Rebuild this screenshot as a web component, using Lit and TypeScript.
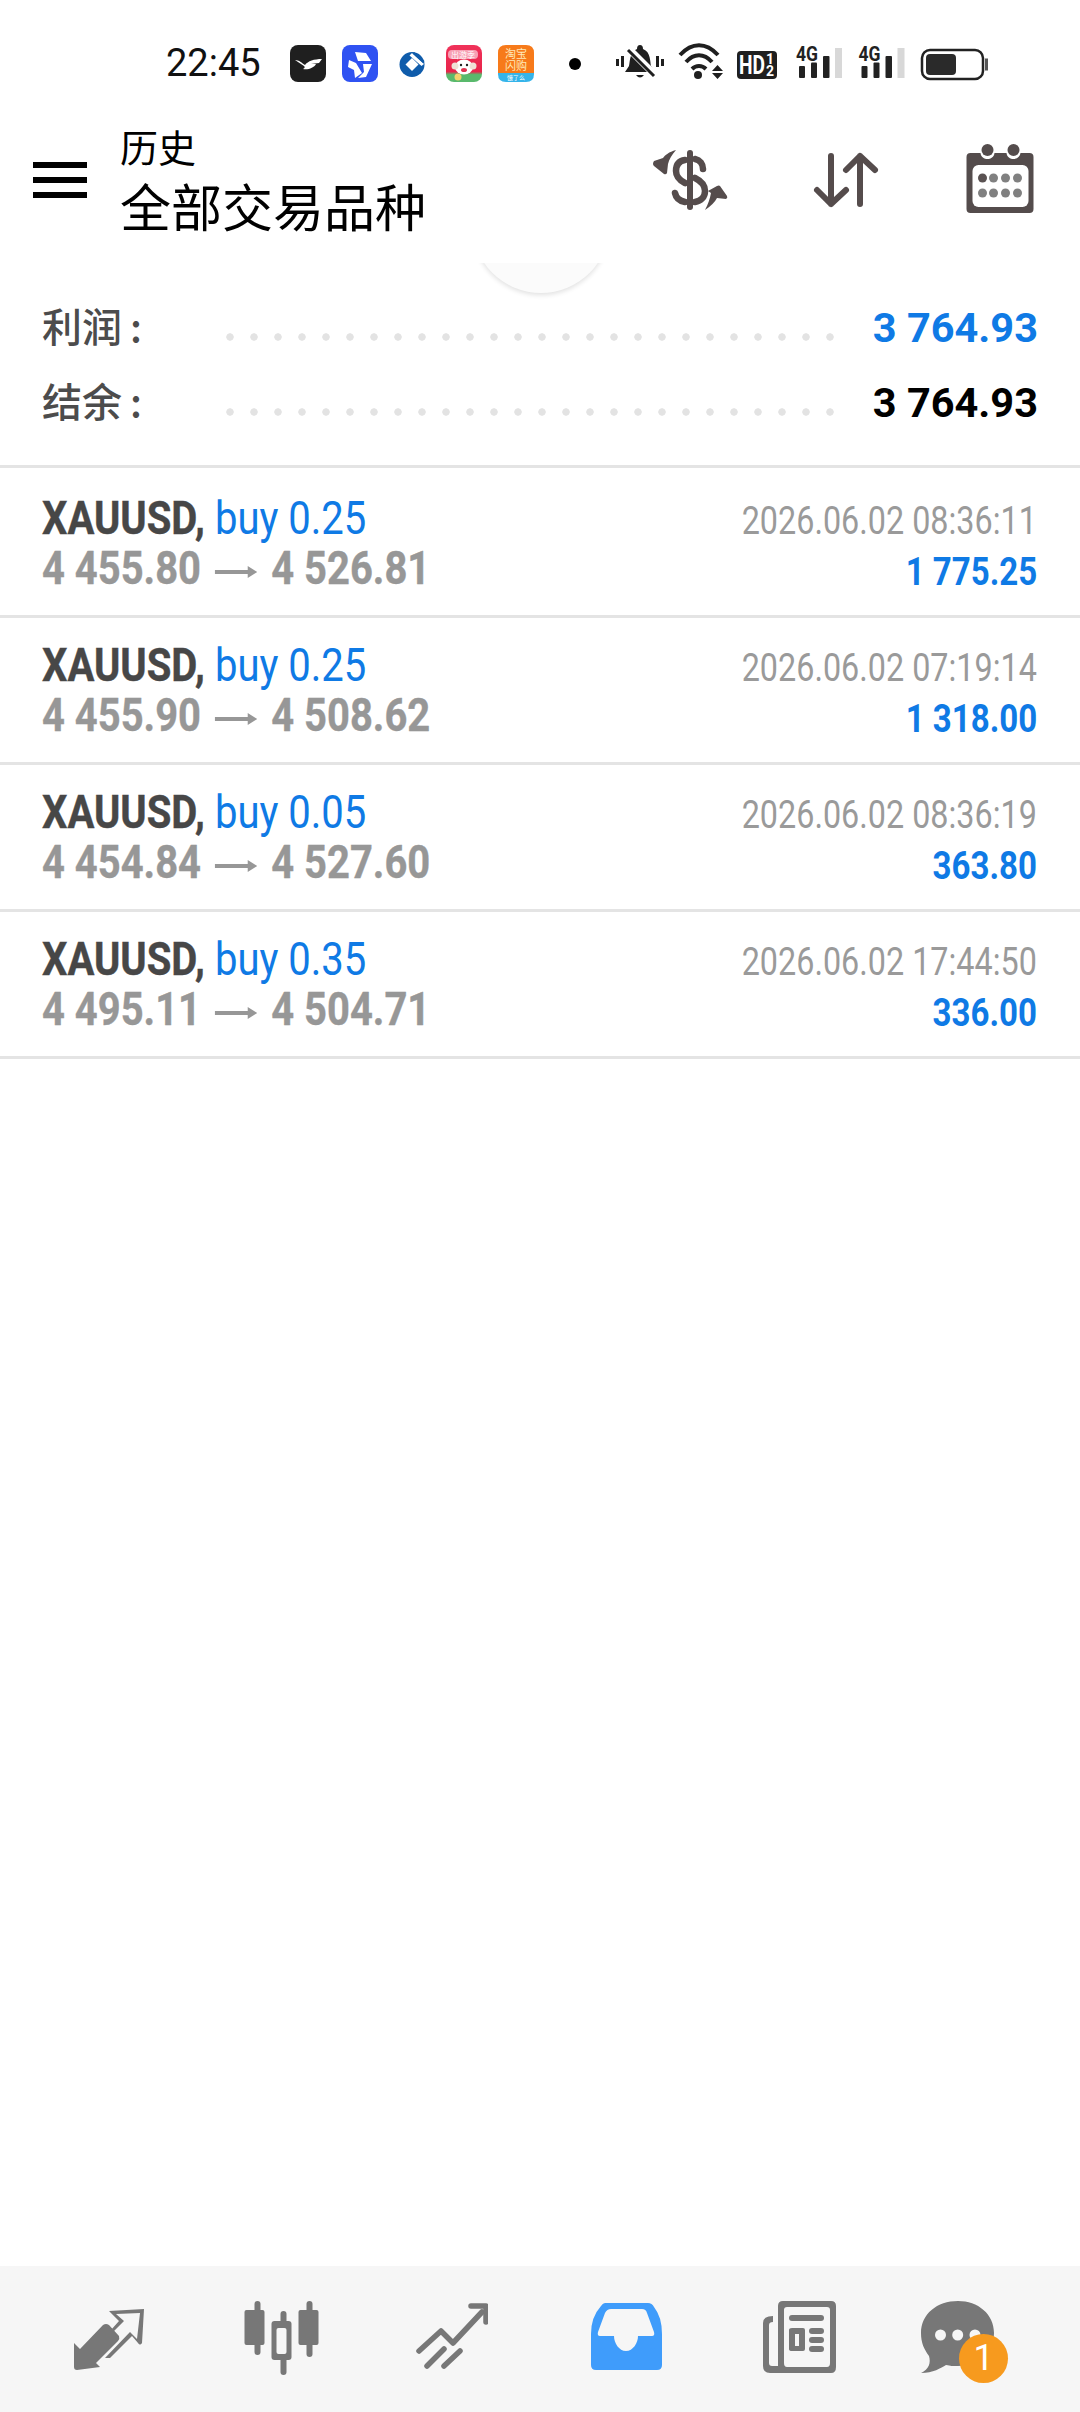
import { LitElement, html, css, svg } from "lit";
import { customElement } from "lit/decorators.js";

const rows = [
  { lot: "0.25", from: "4 455.80", to: "4 526.81", time: "2026.06.02 08:36:11", profit: "1 775.25" },
  { lot: "0.25", from: "4 455.90", to: "4 508.62", time: "2026.06.02 07:19:14", profit: "1 318.00" },
  { lot: "0.05", from: "4 454.84", to: "4 527.60", time: "2026.06.02 08:36:19", profit: "363.80" },
  { lot: "0.35", from: "4 495.11", to: "4 504.71", time: "2026.06.02 17:44:50", profit: "336.00" },
];

const signal = svg`
  <text x="0" y="14" font-family="Roboto" font-weight="700" font-size="20" textLength="22" lengthAdjust="spacingAndGlyphs" fill="#222">4G</text>
  <rect x="3" y="19" width="6" height="12" rx="1" fill="#222"/>
  <rect x="15" y="15.5" width="6" height="15.5" rx="1" fill="#222"/>
  <rect x="27" y="9" width="6.5" height="22" rx="1" fill="#222"/>
  <rect x="39" y="1" width="7" height="30" fill="#d8d8d8"/>`;

@customElement("app-root")
export class AppRoot extends LitElement {
  static styles = css`
    :host { display: block; width: 1080px; height: 2412px; background: #fff; position: relative; overflow: hidden;
      font-family: Roboto, "Noto Sans CJK SC", sans-serif; }
    .page { display: flex; flex-direction: column; height: 2412px; }
    .status { height: 90px; display: flex; align-items: center; padding-left: 166px; padding-top: 36px; box-sizing: border-box; flex: none; }
    .time { font-size: 38px; color: #111; width: 124px; line-height: 54px; flex: none; }
    .status svg { display: block; flex: none; }
    .header { height: 173px; flex: none; display: flex; align-items: flex-start; position: relative; z-index: 2; background: #fff; }
    .burger { margin: 72px 0 0 33px; width: 54px; display: flex; flex-direction: column; gap: 9px; flex: none; }
    .burger i { display: block; height: 6px; background: #000; }
    .titles { margin: 35px 0 0 33px; font-family: "Noto Sans CJK SC", sans-serif; color: #000; flex: none; }
    .t1 { font-size: 38px; line-height: 42px; }
    .t2 { font-size: 51px; line-height: 70px; margin-top: 3px; }
    .hicons { position: absolute; inset: 0; pointer-events: none; }
    .hicons svg { position: absolute; }
    .scrollknob { position: absolute; left: 472px; top: 155px; width: 138px; height: 138px; border-radius: 50%; background: #fbfbfb;
      box-shadow: 0 2px 5px rgba(0,0,0,.12); z-index: 1; }
    .summary { padding: 27px 42px 0 42px; flex: none; height: 205px; box-sizing: border-box; border-bottom: 3px solid #e4e4e4; }
    .sumrow { display: flex; align-items: center; height: 75px; }
    .sumlabel { width: 184px; font-family: "Noto Sans CJK SC", sans-serif; font-size: 40px; font-weight: 500; color: #4c4c4c; flex: none; line-height: 50px; white-space: pre; margin-top: -6px; }
    .colon { margin-left: 8px; }
    .dots { width: 624px; height: 8px; margin-top: 18px; flex: none;
      background: radial-gradient(circle at 4px 4px, #e3e3e3 3.4px, transparent 4px) 0 0 / 24px 8px repeat-x; }
    .sumval { margin-left: auto; font-size: 41.5px; font-weight: 700; white-space: pre; }
    .blue { color: #0f7ae5; }
    .black { color: #000; }
    .row { height: 147px; box-sizing: border-box; border-bottom: 3px solid #e4e4e4; display: flex; justify-content: space-between; padding: 0 43px 0 42px; flex: none; }
    .row.first { height: 150px; padding-top: 3px; }
    .left, .right { display: flex; flex-direction: column; }
    .right { align-items: flex-end; }
    .squeeze { display: inline-block; white-space: pre; }
    .left .squeeze { transform-origin: left center; }
    .right .squeeze { transform-origin: right center; }
    .l1 { font-size: 46px; line-height: 54px; margin-top: 20px; color: #474747; font-weight: 700; -webkit-text-stroke: .4px #474747; }
    .l1 .squeeze { transform: scaleX(.87); }
    .l1 span span { font-weight: 400; color: #0f7ae5; -webkit-text-stroke: 0; }
    .l2 { font-size: 46px; line-height: 50px; margin-top: -2px; color: #979797; font-weight: 700; -webkit-text-stroke: .4px #979797; }
    .l2 .squeeze { transform: scaleX(.868); }
    .r1 { font-size: 38px; line-height: 50px; margin-top: 25px; color: #9a9a9a; }
    .r1 .squeeze { transform: scaleX(.851); }
    .r2 { font-size: 38px; line-height: 46px; margin-top: 3px; color: #0f7ae5; font-weight: 700; }
    .r2 .squeeze { transform: scaleX(.87); }
    .arrow { display: inline-block; width: 49px; height: 12px; margin: 0 16px; vertical-align: middle; }
    .spacer { flex: 1; }
    .nav { height: 146px; flex: none; background: #f6f6f6; position: relative; }
    .nav svg { position: absolute; }
    .badge { position: absolute; left: 959px; top: 68px; width: 49px; height: 49px; border-radius: 50%; background: #f79a1e; color: #fff;
      font-size: 36px; text-align: center; line-height: 49px; font-weight: 400; }
  `;

  render() {
    return html`<div class="page">
      <div class="status">
        <span class="time">22:45</span>
        <svg width="700" height="54" viewBox="290 36 700 54">
          <defs>
            <linearGradient id="g1" x1="0" y1="0" x2="0" y2="1"><stop offset="0" stop-color="#f0325a"/><stop offset=".72" stop-color="#e8244a"/><stop offset=".8" stop-color="#59b96c"/></linearGradient>
          </defs>
          <g transform="translate(290 45)">
            <rect width="36" height="37" rx="8" fill="#1f1f1f"/>
            <path d="M5 15 C9 15 12 18 15 20 C18 16 24 14 32 14 L29 18 L21 19 L26 19 C24 23 18 25 13 24 C15 23 15 22 14 21 C11 19 8 17 5 15Z" fill="#fff"/>
          </g>
          <g transform="translate(342 45)">
            <rect width="36" height="37" rx="8" fill="#2f52f2"/>
            <path d="M13 7 L24 8 L29 16 L16 16Z M7 15 L14 18 L20 28 L13 33 L12 25 L6 22Z M21 19 L30 19 L24 32 L16 33 L22 27Z" fill="#fff"/>
          </g>
          <g transform="translate(399 52)">
            <circle cx="13" cy="12.5" r="12.5" fill="#0f5cab"/>
            <path d="M13 6 L19.5 12.5 L13 19 L6.5 12.5Z" fill="#fff"/>
            <path d="M13 1 L25 12 L22.5 14 L10.5 3.5Z" fill="#fff"/>
            <path d="M15 0 L25.5 9 L24 11 L13.5 1.5Z" fill="#0f5cab"/>
          </g>
          <g transform="translate(446 45)">
            <rect width="36" height="37" rx="8" fill="url(#g1)"/>
            <rect x="2" y="5" width="30" height="9" rx="4" fill="#f7a0b4"/>
            <text x="17" y="13" font-size="8" text-anchor="middle" fill="#fff" font-family="Noto Sans CJK SC">出游季</text>
            <ellipse cx="18" cy="22" rx="9" ry="7.5" fill="#fff"/>
            <circle cx="9" cy="21" r="3.5" fill="#efe1d6"/>
            <circle cx="27" cy="21" r="3.5" fill="#efe1d6"/>
            <circle cx="15" cy="20" r="1.2" fill="#222"/><circle cx="21" cy="20" r="1.2" fill="#222"/>
            <ellipse cx="18" cy="25" rx="3" ry="2" fill="#e2304f"/>
            <circle cx="12" cy="32" r="3.5" fill="#f3d36c"/>
          </g>
          <g transform="translate(498 45)">
            <path d="M8 0 H28 Q36 0 36 8 V28 H0 V8 Q0 0 8 0Z" fill="#f77a1a"/>
            <path d="M0 28 H36 V29 Q36 37 28 37 H8 Q0 37 0 29Z" fill="#35b4ea"/>
            <text x="18" y="13" font-size="11" text-anchor="middle" fill="#ffe9b8" font-family="Noto Sans CJK SC">淘宝</text>
            <text x="18" y="24.5" font-size="11" text-anchor="middle" fill="#ffe9b8" font-family="Noto Sans CJK SC">闪购</text>
            <text x="18" y="34.5" font-size="6" text-anchor="middle" fill="#fff" font-family="Noto Sans CJK SC">饿了么</text>
          </g>

          <circle cx="575" cy="64" r="6" fill="#000"/>

          <g fill="#1f1f1f">
            <rect x="616" y="59" width="3" height="7"/><rect x="621" y="56" width="3" height="11"/>
            <rect x="656" y="56" width="3" height="11"/><rect x="661" y="59" width="3" height="7"/>
            <path d="M640 45 Q643 45 643 49 C651 52 650 62 651 66 L655 72 L625 72 L629 66 C630 60 630 52 637 49 Q637 45 640 45Z"/>
            <path d="M636 75 h8 q-4 5 -8 0Z"/>
          </g>
          <path d="M628 48 L655 75" stroke="#fff" stroke-width="7"/>
          <path d="M628 50 L654 76" stroke="#1f1f1f" stroke-width="3"/>

          <g fill="none" stroke="#1f1f1f" stroke-width="4">
            <path d="M680 55 C692 42 706 42 718 55"/>
            <path d="M686 62 C694 53 704 53 712 62"/>
            <path d="M692 69 C696 65 702 65 706 69"/>
          </g>
          <circle cx="698" cy="75" r="4" fill="#1f1f1f"/>
          <path d="M712 71 L717.5 65 L723 71Z M712 73 L723 73 L717.5 79Z" fill="#1f1f1f"/>

          <rect x="737" y="51" width="40" height="28" rx="4" fill="#1f1f1f"/>
          <text x="739" y="74" font-size="26" font-weight="700" fill="#fff" font-family="Roboto" textLength="26" lengthAdjust="spacingAndGlyphs">HD</text>
          <text x="766" y="64" font-size="14" font-weight="700" fill="#fff" font-family="Roboto" textLength="8" lengthAdjust="spacingAndGlyphs">1</text>
          <text x="766" y="76" font-size="14" font-weight="700" fill="#fff" font-family="Roboto" textLength="8" lengthAdjust="spacingAndGlyphs">2</text>

          <g transform="translate(796 47)">${signal}</g>
          <g transform="translate(858.5 47)">${signal}</g>

          <rect x="922" y="50" width="61" height="29" rx="8" fill="#fff" stroke="#222" stroke-width="2.5"/>
          <rect x="926" y="54" width="30" height="21" rx="4" fill="#2a2a2a"/>
          <rect x="985" y="58.5" width="3" height="12" fill="#555"/>
        </svg>
      </div>

      <div class="header">
        <div class="burger"><i></i><i></i><i></i></div>
        <div class="titles"><div class="t1">历史</div><div class="t2">全部交易品种</div></div>
        <div class="hicons">
          <svg style="left:653px;top:60px" width="76" height="62" viewBox="0 0 76 62">
            <g fill="#554c4c">
              <rect x="34" y="0" width="6" height="60" rx="3"/>
              <path d="M23 0 C16 2 12 5 10 8 L1 11 Q-1 14 1 16 L11 24 Q13 25 14 23 L15 14 C16 9 19 5 23 0Z"/>
              <path d="M52 60 C58 56 62 52 64 48 L73 49 Q75 48 74 46 L67 36 Q66 35 64 36 L55 41 L58 43 C57 49 55 54 52 60Z"/>
            </g>
            <g fill="none" stroke="#554c4c" stroke-width="6.5" stroke-linecap="round">
              <path d="M32 10 C25 11 23 16 23 21 C23 28 28 31 32 33"/>
              <path d="M42 9 C47 10 50 14 50 19"/>
              <path d="M42 28 C48 31 52 35 52 41 C52 47 48 51 42 52"/>
              <path d="M22 43 C23 48 27 51 32 52"/>
            </g>
          </svg>
          <svg style="left:812px;top:60px" width="68" height="60" viewBox="0 0 68 60">
            <g fill="none" stroke="#554c4c" stroke-width="6" stroke-linecap="round" stroke-linejoin="round">
              <path d="M19 6 V54 M5 40 L19 54 L34 40"/>
              <path d="M48 54 V6 M34 20 L48 6 L63 20"/>
            </g>
          </svg>
          <svg style="left:966px;top:54px" width="69" height="70" viewBox="0 0 68 70">
            <path d="M4 9 H14 C15 17 27 17 28 9 H40 C41 17 53 17 54 9 H63 Q67 9 67 13 V65 Q67 69 63 69 H4 Q0 69 0 65 V13 Q0 9 4 9Z" fill="#544c4c"/>
            <circle cx="21" cy="6" r="6" fill="#544c4c"/><circle cx="47" cy="6" r="6" fill="#544c4c"/>
            <rect x="6" y="21" width="56" height="42" rx="6" fill="#fff"/>
            <g fill="#808080">
              <circle cx="16" cy="34" r="4.5" fill="#5a5252"/><circle cx="27" cy="34" r="4.5"/><circle cx="39" cy="34" r="4.5"/><circle cx="51" cy="34" r="4.5"/>
              <circle cx="16" cy="49" r="4.5"/><circle cx="27" cy="49" r="4.5"/><circle cx="39" cy="49" r="4.5"/><circle cx="51" cy="49" r="4.5"/>
            </g>
          </svg>
        </div>
      </div>
      <div class="scrollknob"></div>

      <div class="summary">
        <div class="sumrow"><span class="sumlabel">利润<span class="colon">:</span></span><span class="dots"></span><span class="sumval blue">3 764.93</span></div>
        <div class="sumrow"><span class="sumlabel">结余<span class="colon">:</span></span><span class="dots"></span><span class="sumval black">3 764.93</span></div>
      </div>

      ${rows.map(
        (r, i) => html`<div class="row ${i === 0 ? "first" : ""}">
          <div class="left">
            <div class="l1"><span class="squeeze">XAUUSD, <span>buy ${r.lot}</span></span></div>
            <div class="l2"><span class="squeeze">${r.from}<svg class="arrow" viewBox="0 0 49 12"><path d="M0 4 H38 V0 L49 6 L38 12 V8 H0Z" fill="#979797"/></svg>${r.to}</span></div>
          </div>
          <div class="right">
            <div class="r1"><span class="squeeze">${r.time}</span></div>
            <div class="r2"><span class="squeeze">${r.profit}</span></div>
          </div>
        </div>`
      )}
      <div class="spacer"></div>

      <div class="nav">
        <svg style="left:72px;top:39px" width="76" height="66" viewBox="0 0 76 66">
          <path d="M2 38 L8 44 L31 20 Q34 18 37 20 L47 31 Q48 34 46 36 L24 58 L28 62 L5 65 Q2 65 2 62Z" fill="#777"/>
          <path d="M37 6 L72 4 L70 38 Q68 41 66 38 L60 31 L38 53 L33 53 L58 27 L65 34 L68 8 L44 9 L52 16 L41 27 L39 25 L47 16Z" fill="#777"/>
        </svg>
        <svg style="left:244px;top:35px" width="75" height="76" viewBox="0 0 74 76">
          <g fill="#777">
            <rect x="10" y="0" width="6" height="54" rx="3"/><rect x="0" y="9" width="20" height="35" rx="2"/>
            <rect x="62" y="0" width="6" height="56" rx="3"/><rect x="54" y="9" width="20" height="35" rx="2"/>
            <rect x="36" y="10" width="6" height="64" rx="3"/>
            <rect x="27" y="20" width="20" height="39" rx="3"/>
          </g>
          <rect x="32" y="27" width="10" height="26" rx="2" fill="#f6f6f6"/>
        </svg>
        <svg style="left:416px;top:36px" width="72" height="72" viewBox="0 0 72 72">
          <g fill="none" stroke="#777" stroke-width="5.5" stroke-linecap="round" stroke-linejoin="round">
            <path d="M3 49 L25 29 L37 41 L66 10"/>
            <path d="M55 4 H70 V20"/>
            <path d="M11 64 L28 47 M28 64 L44 49"/>
          </g>
        </svg>
        <svg style="left:591px;top:37px" width="72" height="68" viewBox="0 0 72 68">
          <path fill-rule="evenodd" d="M14 0 H57 Q61 0 63 4 Q71 14 71 31 V62 Q71 67 66 67 H5 Q0 67 0 62 V31 Q0 14 10 3 Q12 0 14 0Z M20 6 Q16 6 14 10 L7 29 Q6 33 9 33 H23 C23 40 28 48 35 48 C42 48 47 40 47 33 H61 Q64 33 63 29 L56 10 Q55 6 51 6Z" fill="#3f9cfb"/>
        </svg>
        <svg style="left:763px;top:35px" width="76" height="74" viewBox="0 0 76 74">
          <g fill="#777">
            <path fill-rule="evenodd" d="M20 0 H68 Q73 0 73 5 V66 Q73 72 68 72 H7 Q0 72 0 65 V22 Q0 15 10 15 V21 Q6 21 6 24 V62 Q6 65 9 65 H15 V5 Q15 0 20 0Z M24 6 Q21 6 21 9 V62 Q21 66 24 66 H64 Q67 66 67 62 V9 Q67 6 64 6Z"/>
            <rect x="26" y="14" width="35" height="6" rx="3"/>
            <path fill-rule="evenodd" d="M29 27 H40 Q42 27 42 29 V48 Q42 50 40 50 H29 Q26 50 26 48 V29 Q26 27 29 27Z M32 33 V45 H36 V33Z"/>
            <rect x="46" y="27" width="15" height="6" rx="3"/><rect x="46" y="36" width="15" height="6" rx="3"/><rect x="46" y="45" width="15" height="6" rx="3"/>
          </g>
        </svg>
        <svg style="left:921px;top:35px" width="74" height="76" viewBox="0 0 74 76">
          <path d="M37 0 C57 0 73 13 73 32 C73 52 55 65 37 65 C31 65 30 65 25 64 C20 67 12 72 0 72 C8 68 10 62 8 55 C3 48 0 42 0 32 C0 13 16 0 37 0Z" fill="#777"/>
          <circle cx="19.5" cy="34" r="5.5" fill="#f6f6f6"/><circle cx="36.7" cy="34" r="5.5" fill="#f6f6f6"/><circle cx="54" cy="34" r="5.5" fill="#f6f6f6"/>
        </svg>
        <div class="badge">1</div>
      </div>
    </div>`;
  }
}
